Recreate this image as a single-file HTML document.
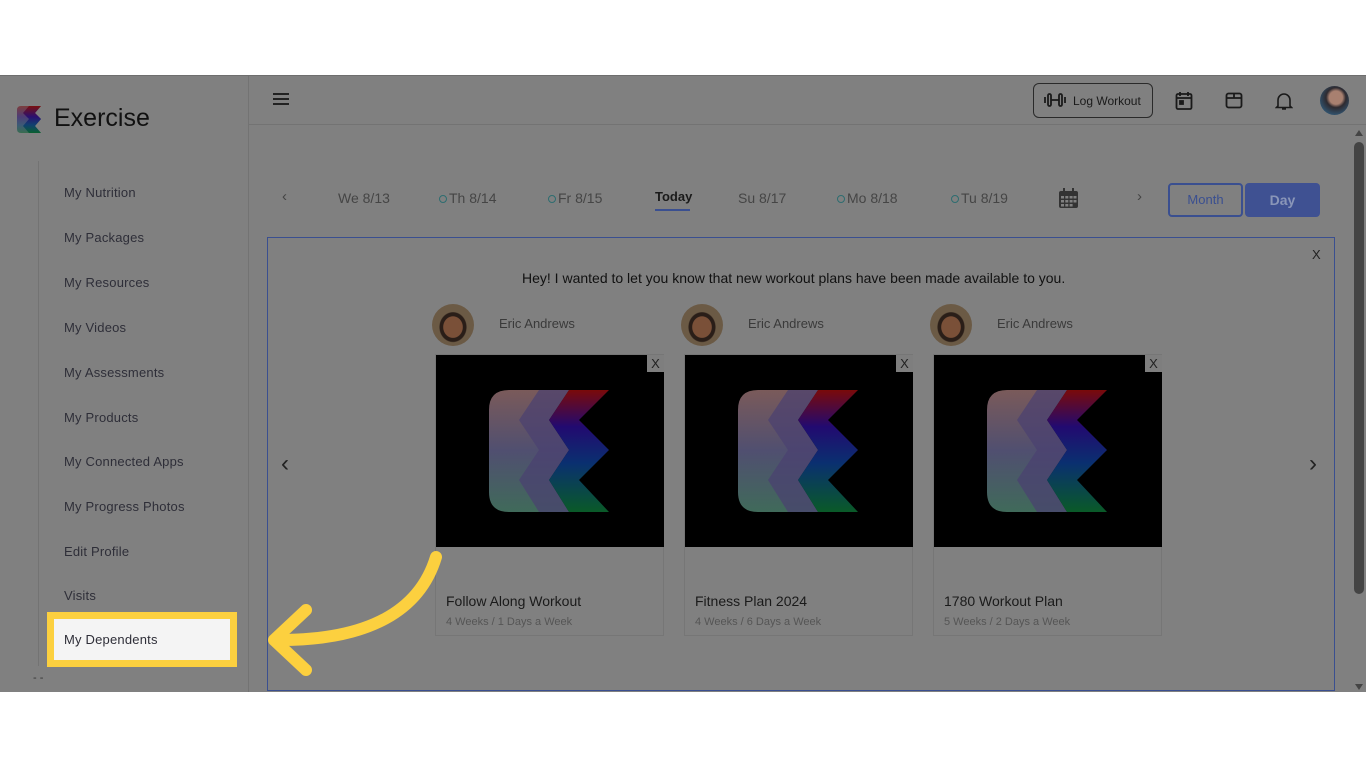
<!DOCTYPE html>
<html><head><meta charset="utf-8"><style>
*{margin:0;padding:0;box-sizing:border-box}
body{width:1366px;height:768px;background:#fff;position:relative;overflow:hidden;font-family:"Liberation Sans",sans-serif}
.app{position:absolute;left:0;top:75px;width:1366px;height:617px;background:#808080;border-top:1px solid #6e6e6e;overflow:hidden}
.abs{position:absolute}
.side{left:0;top:0;width:249px;height:617px;border-right:1px solid #737373}
.nav{position:absolute;left:64px;font-size:13px;color:#2e2e38;letter-spacing:.2px}
.day{position:absolute;top:114px;font-size:14px;color:#454545}
.dot{display:inline-block;width:8px;height:8px;border:1.5px solid #2d6d70;border-radius:50%;margin-right:2px}
.card{position:absolute;top:278px;width:229px;height:282px;border:1px solid #767676}
.img{position:absolute;left:0;top:0;width:228px;height:192px;background:#000}
.x{position:absolute;right:0;top:0;width:17px;height:17px;background:#7e7e7e;color:#222;font-size:13px;text-align:center;line-height:17px}
.t{position:absolute;left:10px;top:238px;font-size:14px;color:#1a1a1a}
.s{position:absolute;left:10px;top:261px;font-size:11px;color:#555}
.av{position:absolute;top:228px;width:42px;height:42px;border-radius:50%;background:radial-gradient(ellipse at 50% 55%,#7a5038 0 32%,#2a1e18 34% 44%,#6b5a45 47%)}
.nm{position:absolute;top:240px;font-size:13px;color:#3a3a3a}
</style></head><body>
<div class="app">
 <div class="abs side">
  <svg class="abs" style="left:17px;top:30px" width="28" height="27" viewBox="0 0 28 27"><defs><linearGradient id="lg" x1="0" y1="0" x2="0" y2="1"><stop offset="0" stop-color="#7a1010"/><stop offset=".4" stop-color="#2a1070"/><stop offset=".7" stop-color="#104070"/><stop offset="1" stop-color="#0a6030"/></linearGradient></defs><path d="M4 0h20l-6 7 6 6-6 7 6 7H4Q0 27 0 23V4Q0 0 4 0z" fill="url(#lg)" opacity=".6"/><path d="M12 0h12l-6 7 6 6-6 7 6 7H12l-6-7 6-7-6-6z" fill="url(#lg)"/></svg>
  <div class="abs" style="left:54px;top:28px;font-size:25px;color:#111">Exercise</div>
  <div class="abs" style="left:38px;top:85px;width:1px;height:505px;background:#737373"></div>
  <div class="nav" style="top:109px">My Nutrition</div>
  <div class="nav" style="top:154px">My Packages</div>
  <div class="nav" style="top:199px">My Resources</div>
  <div class="nav" style="top:244px">My Videos</div>
  <div class="nav" style="top:289px">My Assessments</div>
  <div class="nav" style="top:334px">My Products</div>
  <div class="nav" style="top:378px">My Connected Apps</div>
  <div class="nav" style="top:423px">My Progress Photos</div>
  <div class="nav" style="top:468px">Edit Profile</div>
  <div class="nav" style="top:512px">Visits</div>
  <div class="abs" style="left:33px;top:596px;font-size:11px;color:#333">- -</div>
 </div>
 <div class="abs" style="left:249px;top:0;width:1117px;height:49px;border-bottom:1px solid #737373"></div>
 <div class="abs" style="left:273px;top:17px;width:16px;height:2px;background:#222;box-shadow:0 5px #222,0 10px #222"></div>
 <div class="abs" style="left:1033px;top:7px;width:120px;height:35px;border:1px solid #2a2a2a;border-radius:6px;font-size:12px;color:#1a1a1a;padding:10px 0 0 39px">Log Workout</div>
 <svg class="abs" style="left:1044px;top:16px" width="22" height="16" viewBox="0 0 22 16" fill="none" stroke="#1a1a1a" stroke-width="1.8"><rect x="4" y="2" width="3" height="12" rx="1.5"/><rect x="15" y="2" width="3" height="12" rx="1.5"/><path d="M1 5v6M21 5v6M7 8h8"/></svg>
 <svg class="abs" style="left:1175px;top:15px" width="18" height="20" viewBox="0 0 18 20" fill="none" stroke="#1a1a1a" stroke-width="1.8"><rect x="1.5" y="3" width="15" height="15" rx="1.5"/><path d="M1.5 7h15M5 1v4M13 1v4"/><rect x="5" y="10" width="3" height="3" fill="#1a1a1a"/></svg>
 <svg class="abs" style="left:1225px;top:16px" width="18" height="17" viewBox="0 0 18 17" fill="none" stroke="#1a1a1a" stroke-width="1.8"><rect x="1.5" y="1.5" width="15" height="14" rx="2"/><path d="M1.5 6h15M9 1.5V6"/></svg>
 <svg class="abs" style="left:1275px;top:15px" width="18" height="20" viewBox="0 0 18 20" fill="none" stroke="#1a1a1a" stroke-width="1.6"><path d="M3 15V9a6 6 0 0112 0v6l1.5 1.5h-15zM7 18h4"/></svg>
 <div class="abs" style="left:1320px;top:10px;width:29px;height:29px;border-radius:50%;background:radial-gradient(circle at 55% 40%,#a88070 0 28%,#2e2a30 42%,#30506a 72%)"></div>
 <div class="abs" style="left:1354px;top:66px;width:10px;height:452px;background:#444;border-radius:5px"></div>
 <div class="abs" style="left:1355px;top:54px;width:0;height:0;border:4px solid transparent;border-bottom:6px solid #444;border-top:0"></div>
 <div class="abs" style="left:1355px;top:608px;width:0;height:0;border:4px solid transparent;border-top:6px solid #444;border-bottom:0"></div>

 <div class="abs" style="left:282px;top:112px;font-size:15px;color:#444">‹</div>
 <div class="day" style="left:338px">We 8/13</div>
 <div class="day" style="left:439px"><span class="dot"></span>Th 8/14</div>
 <div class="day" style="left:548px"><span class="dot"></span>Fr 8/15</div>
 <div class="abs" style="left:655px;top:113px;font-size:13px;font-weight:bold;color:#1a1a1a">Today</div>
 <div class="abs" style="left:655px;top:133px;width:35px;height:2px;background:#3a4f90"></div>
 <div class="day" style="left:738px">Su 8/17</div>
 <div class="day" style="left:837px"><span class="dot"></span>Mo 8/18</div>
 <div class="day" style="left:951px"><span class="dot"></span>Tu 8/19</div>
 <svg class="abs" style="left:1059px;top:112px" width="19" height="20" viewBox="0 0 19 20" fill="#333"><rect x="0" y="3" width="19" height="17" rx="2"/><g fill="#808080"><rect x="2" y="8" width="3" height="2.5"/><rect x="6.3" y="8" width="3" height="2.5"/><rect x="10.6" y="8" width="3" height="2.5"/><rect x="14.5" y="8" width="3" height="2.5"/><rect x="2" y="12" width="3" height="2.5"/><rect x="6.3" y="12" width="3" height="2.5"/><rect x="10.6" y="12" width="3" height="2.5"/><rect x="14.5" y="12" width="3" height="2.5"/><rect x="2" y="16" width="3" height="2.5"/><rect x="6.3" y="16" width="3" height="2.5"/><rect x="10.6" y="16" width="3" height="2.5"/></g><rect x="4" y="0" width="2" height="5"/><rect x="13" y="0" width="2" height="5"/></svg>
 <div class="abs" style="left:1137px;top:112px;font-size:15px;color:#444">›</div>
 <div class="abs" style="left:1168px;top:107px;width:75px;height:34px;border:2px solid #3a4f90;border-radius:4px;font-size:13px;color:#3a4f90;text-align:center;line-height:30px">Month</div>
 <div class="abs" style="left:1245px;top:107px;width:75px;height:34px;background:#3f5192;border-radius:4px;font-size:14px;font-weight:bold;color:#8a96b8;text-align:center;line-height:34px">Day</div>

 <div class="abs" style="left:267px;top:161px;width:1068px;height:454px;border:1px solid #3a4f90"></div>
 <div class="abs" style="left:1312px;top:171px;font-size:13px;color:#222">X</div>
 <div class="abs" style="left:522px;top:194px;font-size:14px;color:#111">Hey! I wanted to let you know that new workout plans have been made available to you.</div>
 <div class="abs" style="left:281px;top:374px;font-size:24px;color:#222">‹</div>
 <div class="abs" style="left:1309px;top:374px;font-size:24px;color:#222">›</div>

 <div class="av" style="left:432px"></div><div class="nm" style="left:499px">Eric Andrews</div>
 <div class="av" style="left:681px"></div><div class="nm" style="left:748px">Eric Andrews</div>
 <div class="av" style="left:930px"></div><div class="nm" style="left:997px">Eric Andrews</div>

 <svg width="0" height="0" style="position:absolute"><defs><linearGradient id="g2" x1="0" y1="0" x2="0" y2="1"><stop offset="0" stop-color="#7a0a0a"/><stop offset=".3" stop-color="#220a70"/><stop offset=".6" stop-color="#0a3070"/><stop offset="1" stop-color="#0a5a28"/></linearGradient><linearGradient id="g1" x1="0" y1="0" x2="0" y2="1"><stop offset="0" stop-color="#7a5a5a"/><stop offset=".5" stop-color="#504f70"/><stop offset="1" stop-color="#406a5a"/></linearGradient></defs></svg>
 <div class="card" style="left:435px"><div class="img"><svg style="position:absolute;left:53px;top:35px" width="120" height="122" viewBox="0 0 120 122"><path d="M20 0h60l-20 30 20 30-20 30 20 32H20Q0 122 0 102V20Q0 0 20 0z" fill="url(#g1)"/><path d="M50 0h30l-20 30 20 30-20 30 20 32H50l-20-32 20-30-20-30z" fill="#4a4070" opacity=".7"/><path d="M80 0h40l-30 30 30 30-30 30 30 32H80l-20-32 20-30-20-30z" fill="url(#g2)"/></svg><div class="x">X</div></div><div class="t">Follow Along Workout</div><div class="s">4 Weeks / 1 Days a Week</div></div>
 <div class="card" style="left:684px"><div class="img"><svg style="position:absolute;left:53px;top:35px" width="120" height="122" viewBox="0 0 120 122"><path d="M20 0h60l-20 30 20 30-20 30 20 32H20Q0 122 0 102V20Q0 0 20 0z" fill="url(#g1)"/><path d="M50 0h30l-20 30 20 30-20 30 20 32H50l-20-32 20-30-20-30z" fill="#4a4070" opacity=".7"/><path d="M80 0h40l-30 30 30 30-30 30 30 32H80l-20-32 20-30-20-30z" fill="url(#g2)"/></svg><div class="x">X</div></div><div class="t">Fitness Plan 2024</div><div class="s">4 Weeks / 6 Days a Week</div></div>
 <div class="card" style="left:933px"><div class="img"><svg style="position:absolute;left:53px;top:35px" width="120" height="122" viewBox="0 0 120 122"><path d="M20 0h60l-20 30 20 30-20 30 20 32H20Q0 122 0 102V20Q0 0 20 0z" fill="url(#g1)"/><path d="M50 0h30l-20 30 20 30-20 30 20 32H50l-20-32 20-30-20-30z" fill="#4a4070" opacity=".7"/><path d="M80 0h40l-30 30 30 30-30 30 30 32H80l-20-32 20-30-20-30z" fill="url(#g2)"/></svg><div class="x">X</div></div><div class="t">1780 Workout Plan</div><div class="s">5 Weeks / 2 Days a Week</div></div>
</div>
<div class="abs" style="left:47px;top:612px;width:190px;height:55px;border:7px solid #fcd03f;background:#f4f4f4"></div>
<div class="abs" style="left:64px;top:632px;font-size:13px;color:#2e2e38;letter-spacing:.2px">My Dependents</div>
<svg class="abs" style="left:0;top:0" width="1366" height="768" fill="none" stroke="#fcd03f" stroke-width="12" stroke-linecap="round" stroke-linejoin="round"><path d="M436 557C420 610 370 640 280 640"/><path d="M306 610L274 640 306 670"/></svg>
</body></html>
